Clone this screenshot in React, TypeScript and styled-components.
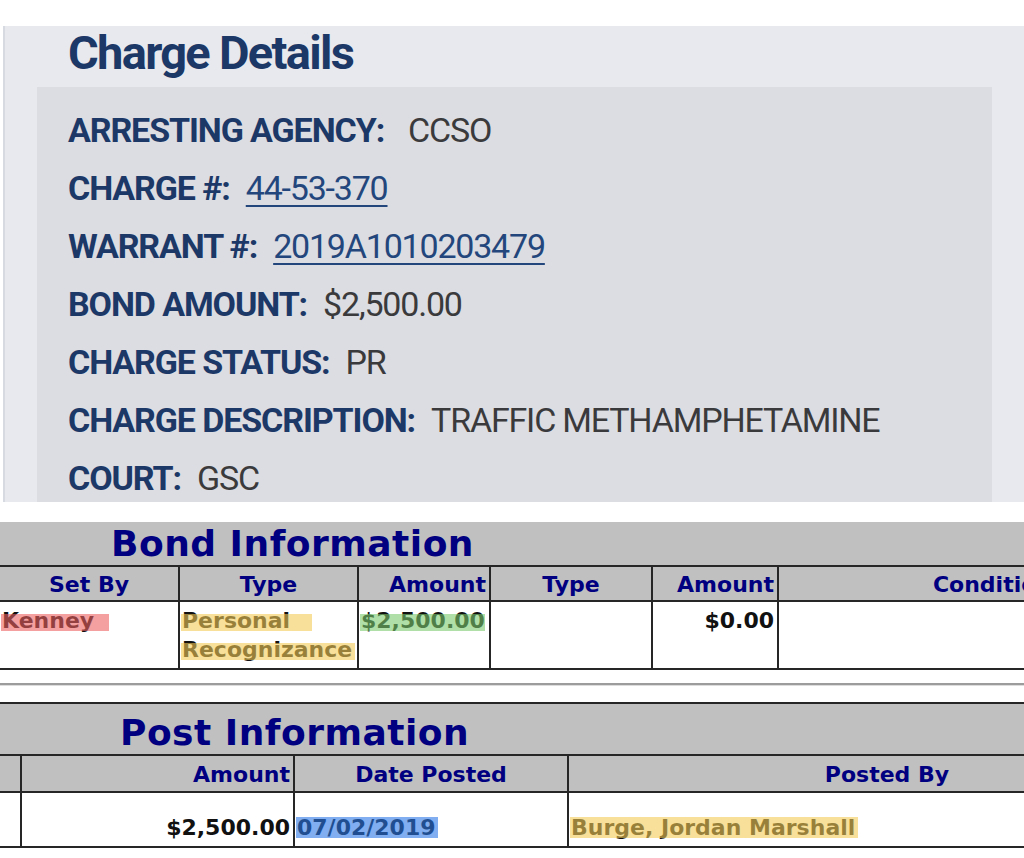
import styled, { createGlobalStyle } from "styled-components";

const GlobalStyle = createGlobalStyle`
  html, body {
    margin: 0;
    padding: 0;
    background: #ffffff;
  }
  body {
    width: 1024px;
    height: 858px;
    overflow: hidden;
  }
`;

const Page = styled.main`
  padding-top: 26px;
`;

/* ---------- charge details ---------- */

const ChargePanel = styled.section`
  display: flex;
  flex-direction: column;
  box-sizing: border-box;
  height: 476px;
  margin-left: 3px;
  padding: 0 32px;
  background: #e8e9ee;
  border-left: 2px solid #d8dae1;
  font-family: "Roboto", "Liberation Sans", sans-serif;
`;

const Heading = styled.h2`
  margin: 0 0 7px 31px;
  font-size: 47px;
  line-height: 54px;
  font-weight: 700;
  letter-spacing: -1.7px;
  color: #1c3867;
`;

const DetailBox = styled.div`
  flex: 1;
  overflow: hidden;
  padding: 14px 31px 0;
  background: #dcdde2;
`;

const DetailRow = styled.div`
  display: flex;
  align-items: baseline;
  height: 58px;
  line-height: 58px;
  font-size: 34px;
  white-space: nowrap;
`;

const Label = styled.span`
  font-weight: 700;
  letter-spacing: -1.1px;
  color: #1c3867;
`;

const Value = styled.span<{ $gap?: number }>`
  margin-left: ${({ $gap }) => $gap ?? 16}px;
  letter-spacing: -1.2px;
  color: #3a3a3c;
`;

const ValueLink = styled.a`
  margin-left: 16px;
  letter-spacing: -1.2px;
  color: #23477d;
  text-decoration: underline;
  text-decoration-thickness: 2px;
  text-underline-offset: 5px;
`;

/* ---------- tables ---------- */

const Tables = styled.div`
  margin-top: 20px;
`;

const Table = styled.table<{ $shift: number }>`
  border-collapse: separate;
  border-spacing: 0;
  table-layout: fixed;
  margin-left: ${({ $shift }) => $shift}px;
  font-family: "DejaVu Sans", Verdana, sans-serif;
  font-size: 22px;
  font-weight: 700;
  background: #ffffff;

  th, td {
    box-sizing: border-box;
    overflow: hidden;
    white-space: nowrap;
  }
`;

const TitleCell = styled.th<{ $indent: number; $top?: boolean }>`
  padding: ${({ $top }) => ($top ? "8px" : "0")} 0 0 ${({ $indent }) => $indent}px;
  text-align: left;
  font-size: 36px;
  letter-spacing: 0.5px;
  line-height: ${({ $top }) => ($top ? 42 : 43)}px;
  color: #000080;
  background: #c0c0c0;
  border-top: ${({ $top }) => ($top ? "2px solid #262626" : "none")};
  border-bottom: 2px solid #262626;
`;

const HeadCell = styled.th<{ $align?: string; $line?: number }>`
  padding: 2px 3px 0;
  text-align: ${({ $align }) => $align ?? "center"};
  line-height: ${({ $line }) => $line ?? 31}px;
  color: #000080;
  background: #c0c0c0;
  border-left: 2px solid #262626;
  border-bottom: 2px solid #262626;
`;

const DataCell = styled.td<{ $align?: string; $pad?: number }>`
  padding: ${({ $pad }) => $pad ?? 4}px 3px 4px 2px;
  vertical-align: top;
  text-align: ${({ $align }) => $align ?? "left"};
  line-height: 29px;
  color: #111111;
  border-left: 2px solid #262626;
  border-bottom: 2px solid #262626;
`;

const Mark = styled.span<{ $color: string; $extend?: number; $top?: number }>`
  position: relative;

  &::after {
    content: "";
    position: absolute;
    left: -1px;
    right: ${({ $extend }) => -($extend ?? 1)}px;
    top: ${({ $top }) => $top ?? 6}px;
    bottom: 2px;
    background: ${({ $color }) => $color};
    opacity: 0.6;
  }
`;

const Divider = styled.hr`
  height: 2px;
  margin: 13px 0 17px;
  border: none;
  background: #9c9c9c;
  box-shadow: 0 1px 0 #dcdcdc;
`;

const PINK = "#ed6161";
const YELLOW = "#f3cb57";
const GREEN = "#7bcb6e";
const BLUE = "#2b78e6";

export default function App() {
  return (
    <Page>
      <GlobalStyle />
      <ChargePanel>
        <Heading>Charge Details</Heading>
        <DetailBox>
          <DetailRow>
            <Label>ARRESTING AGENCY:</Label>
            <Value $gap={24}>CCSO</Value>
          </DetailRow>
          <DetailRow>
            <Label>CHARGE #:</Label>
            <ValueLink href="#charge">44-53-370</ValueLink>
          </DetailRow>
          <DetailRow>
            <Label>WARRANT #:</Label>
            <ValueLink href="#warrant">2019A1010203479</ValueLink>
          </DetailRow>
          <DetailRow>
            <Label>BOND AMOUNT:</Label>
            <Value>$2,500.00</Value>
          </DetailRow>
          <DetailRow>
            <Label>CHARGE STATUS:</Label>
            <Value>PR</Value>
          </DetailRow>
          <DetailRow>
            <Label>CHARGE DESCRIPTION:</Label>
            <Value>TRAFFIC METHAMPHETAMINE</Value>
          </DetailRow>
          <DetailRow>
            <Label>COURT:</Label>
            <Value>GSC</Value>
          </DetailRow>
        </DetailBox>
      </ChargePanel>

      <Tables>
        <Table $shift={-2} style={{ width: 1221 }}>
          <colgroup>
            <col style={{ width: 180 }} />
            <col style={{ width: 179 }} />
            <col style={{ width: 132 }} />
            <col style={{ width: 162 }} />
            <col style={{ width: 126 }} />
            <col style={{ width: 442 }} />
          </colgroup>
          <thead>
            <tr>
              <TitleCell colSpan={6} $indent={113}>
                Bond Information
              </TitleCell>
            </tr>
            <tr>
              <HeadCell>Set By</HeadCell>
              <HeadCell>Type</HeadCell>
              <HeadCell $align="right">Amount</HeadCell>
              <HeadCell>Type</HeadCell>
              <HeadCell $align="right">Amount</HeadCell>
              <HeadCell>Conditions</HeadCell>
            </tr>
          </thead>
          <tbody>
            <tr>
              <DataCell>
                <Mark $color={PINK} $extend={15}>
                  Kenney
                </Mark>
              </DataCell>
              <DataCell>
                <Mark $color={YELLOW} $extend={22}>
                  Personal
                </Mark>
                <br />
                <Mark $color={YELLOW} $extend={3}>
                  Recognizance
                </Mark>
              </DataCell>
              <DataCell>
                <Mark $color={GREEN} $extend={0}>
                  $2,500.00
                </Mark>
              </DataCell>
              <DataCell />
              <DataCell $align="right">$0.00</DataCell>
              <DataCell />
            </tr>
          </tbody>
        </Table>

        <Divider />

        <Table $shift={-60} style={{ width: 1265 }}>
          <colgroup>
            <col style={{ width: 80 }} />
            <col style={{ width: 273 }} />
            <col style={{ width: 274 }} />
            <col style={{ width: 638 }} />
          </colgroup>
          <thead>
            <tr>
              <TitleCell colSpan={4} $indent={180} $top>
                Post Information
              </TitleCell>
            </tr>
            <tr>
              <HeadCell $line={33} />
              <HeadCell $line={33} $align="right">
                Amount
              </HeadCell>
              <HeadCell $line={33}>Date Posted</HeadCell>
              <HeadCell $line={33}>Posted By</HeadCell>
            </tr>
          </thead>
          <tbody>
            <tr>
              <DataCell $pad={20} />
              <DataCell $pad={20} $align="right">
                $2,500.00
              </DataCell>
              <DataCell $pad={20}>
                <Mark $color={BLUE} $extend={2} $top={2}>
                  07/02/2019
                </Mark>
              </DataCell>
              <DataCell $pad={20}>
                <Mark $color={YELLOW} $extend={3} $top={2}>
                  Burge, Jordan Marshall
                </Mark>
              </DataCell>
            </tr>
          </tbody>
        </Table>
      </Tables>
    </Page>
  );
}
